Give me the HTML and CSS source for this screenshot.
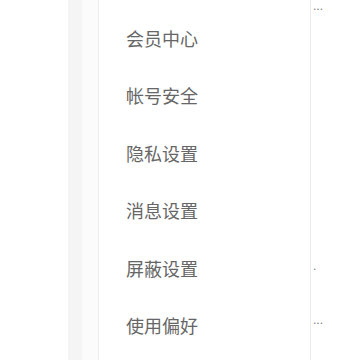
FILE: index.html
```html
<!DOCTYPE html>
<html lang="zh-CN">
<head>
    <meta charset="UTF-8">
    <meta name="viewport" content="width=device-width, initial-scale=1.0">
    <title>设置</title>
    <link rel="stylesheet" href="styles.css">
</head>
<body>
    <div class="page">
        <div class="edge"></div>
        <div class="band"></div>
        <div class="gap"></div>
        <nav class="menu">
            <a href="#">会员中心</a>
            <a href="#">帐号安全</a>
            <a href="#">隐私设置</a>
            <a href="#">消息设置</a>
            <a href="#">屏蔽设置</a>
            <a href="#">使用偏好</a>
        </nav>
        <div class="side">
            <span class="dots top">...</span>
            <span class="dots mid">.</span>
            <span class="dots low">...</span>
        </div>
    </div>
</body>
</html>
```

FILE: styles.css
```css
body {
    margin: 0;
    padding: 0;
    background-color: #fff;
    font-family: "Noto Sans CJK SC", "Noto Sans", sans-serif;
}
.page {
    display: flex;
    height: 360px;
    overflow: hidden;
}
.edge {
    width: 68px;
    background-color: #fff;
}
.band {
    width: 14px;
    background-color: #f5f5f5;
}
.gap {
    width: 16px;
    background-color: #fbfbfb;
}
.menu {
    width: 211px;
    display: flex;
    flex-direction: column;
    padding-top: 10px;
    border-left: 1px solid #ececec;
    border-right: 1px solid #ececec;
    background-color: #fff;
}
.menu a {
    display: block;
    height: 57.4px;
    line-height: 57.4px;
    padding-left: 27px;
    font-size: 18px;
    color: #666;
    text-decoration: none;
}
.side {
    flex: 1;
    display: flex;
    flex-direction: column;
    align-items: flex-start;
    padding-left: 2px;
    color: #777;
    font-family: "Liberation Sans", sans-serif;
    font-size: 12px;
    line-height: 12px;
}
.top {
    margin-top: 0;
}
.mid {
    margin-top: 248px;
}
.low {
    margin-top: 42px;
}
```
